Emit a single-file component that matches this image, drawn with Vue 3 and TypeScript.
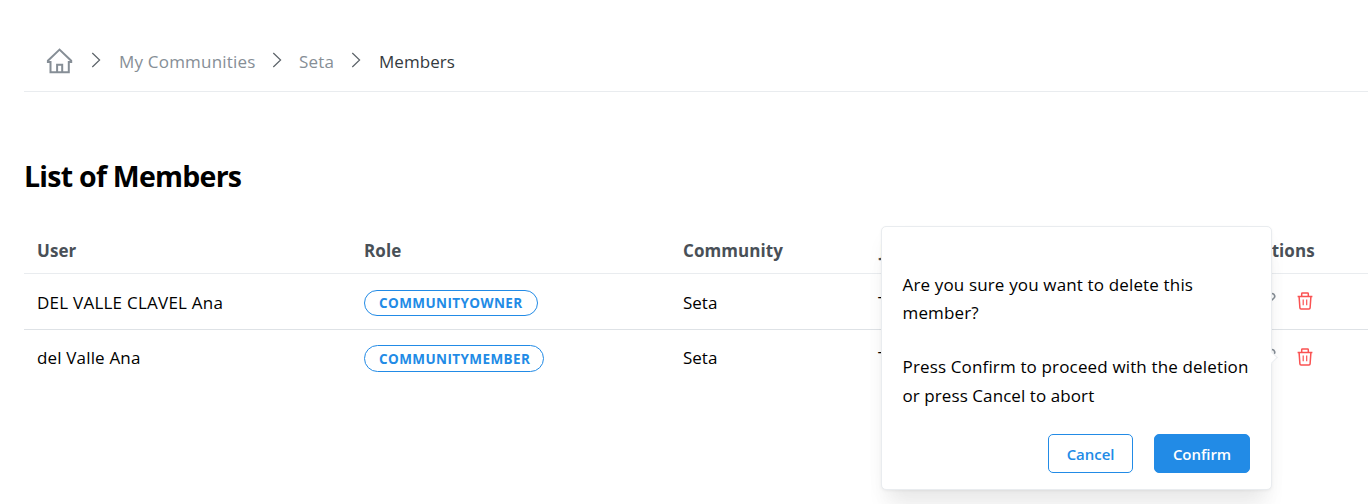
<script setup lang="ts">
interface Member {
  name: string
  role: string
  community: string
  joined: string
  kind: string
}

const members: Member[] = [
  { name: 'DEL VALLE CLAVEL Ana', role: 'COMMUNITYOWNER', community: 'Seta', joined: 'Tue', kind: 'owner' },
  { name: 'del Valle Ana', role: 'COMMUNITYMEMBER', community: 'Seta', joined: 'Tue', kind: 'member' },
]
</script>

<template>
  <div class="page">
    <nav class="crumbs">
      <svg class="home" width="28" height="28" viewBox="0 0 28 28">
        <path d="M13.5 2.6 1.9 13.7V15H4.5V25.3H22.8V15H25.2V13.7ZM11.1 25V17.7H16.2V25" />
      </svg>
      <svg class="sep" width="10" height="16" viewBox="0 0 10 16"><path d="M1.3 1 8.6 8 1.3 15" /></svg>
      <a class="c1">My Communities</a>
      <svg class="sep" width="10" height="16" viewBox="0 0 10 16"><path d="M1.3 1 8.6 8 1.3 15" /></svg>
      <a class="c2">Seta</a>
      <svg class="sep" width="10" height="16" viewBox="0 0 10 16"><path d="M1.3 1 8.6 8 1.3 15" /></svg>
      <span class="current">Members</span>
    </nav>

    <h1>List of Members</h1>

    <div class="table">
      <div class="row head">
        <span>User</span>
        <span>Role</span>
        <span>Community</span>
        <span class="joined">Join Date</span>
        <span class="act">Actions</span>
      </div>
      <div v-for="m in members" :key="m.kind" class="row" :class="m.kind">
        <span class="name">{{ m.name }}</span>
        <span class="role"><span class="badge">{{ m.role }}</span></span>
        <span>{{ m.community }}</span>
        <span>{{ m.joined }}</span>
        <span class="actions">
          <svg class="edit" width="18" height="18" viewBox="0 0 18 18">
            <path d="M2 16 3 11.5 12.3 2.2Q14 .8 16 2.4 17.6 4.4 16 6L6.5 15Z" />
          </svg>
          <svg class="trash" width="16" height="18" viewBox="0 0 16 18">
            <path d="M.6 4.5H15.4M4.7 4.3V1.8Q4.7 1.1 5.4 1.1H10.6Q11.3 1.1 11.3 1.8V4.3M2.1 4.6 2.9 15.9Q3 16.9 4 16.9H12Q13 16.9 13.1 15.9L13.9 4.6" />
            <path class="thin" d="M6.2 7.5V13.3M9.7 7.5V13.3" />
          </svg>
        </span>
      </div>
    </div>

    <div class="popover">
      <p>Are you sure you want to delete this<br />member?</p>
      <p>Press Confirm to proceed with the deletion<br /><span class="last">or press Cancel to abort</span></p>
      <div class="buttons">
        <button class="cancel">Cancel</button>
        <button class="confirm">Confirm</button>
      </div>
      <i class="arrow"></i>
    </div>
  </div>
</template>

<style>
body {
  margin: 0;
  overflow: hidden;
  background: #fff;
}
</style>

<style scoped>
.page {
  position: relative;
  box-sizing: border-box;
  width: 1368px;
  height: 504px;
  padding-left: 24px;
  overflow: hidden;
  font-family: "Open Sans", "Noto Sans", sans-serif;
  font-size: 17px;
  color: #000;
  white-space: nowrap;
}
.crumbs {
  display: flex;
  align-items: center;
  box-sizing: border-box;
  height: 92px;
  padding: 32px 0 0 22px;
  border-bottom: 1px solid #e9ecef;
  line-height: 24px;
  color: #868e96;
}
.crumbs svg {
  fill: none;
  flex: none;
}
.home {
  margin-top: -2px;
  stroke: #868e96;
  stroke-width: 2;
}
.sep {
  margin-top: -3px;
  stroke: #5c6369;
  stroke-width: 1.2;
}
.home + .sep { margin-left: 17px; margin-right: 18px; }
.c1 { width: 153px; letter-spacing: .2px; }
.c2 { width: 52px; margin-left: 17px; letter-spacing: .2px; }
.current { margin-left: 18px; color: #343a40; letter-spacing: .05px; }
h1 {
  margin: 63px 0 0;
  font-size: 28.5px;
  line-height: 42px;
  font-weight: 700;
  letter-spacing: -.75px;
}
.table { margin-top: 32px; }
.row {
  display: grid;
  grid-template-columns: 327px 319px 195px 372px 1fr;
  align-items: center;
  box-sizing: border-box;
  height: 56px;
  padding-left: 13px;
}
.head {
  height: 45px;
  padding-bottom: 2px;
  border-bottom: 1px solid #e9ecef;
  font-weight: 700;
  color: #495057;
  letter-spacing: .08px;
}
.joined { padding-left: 2px; }
.act { padding-left: 1px; }
.owner { padding-top: 2px; border-bottom: 1px solid #dee2e6; }
.member { padding-bottom: 2px; }
.owner .name { letter-spacing: .24px; }
.member .name { letter-spacing: .16px; }
.role { display: flex; }
.badge {
  display: flex;
  align-items: center;
  box-sizing: border-box;
  width: 174px;
  height: 26px;
  padding-left: 14px;
  border: 1px solid #228be6;
  border-radius: 13px;
  color: #228be6;
  font-size: 13.5px;
  font-weight: 700;
  letter-spacing: .4px;
}
.member .badge { width: 180px; height: 27px; margin-top: 3px; border-radius: 14px; }
.actions {
  display: flex;
  gap: 21px;
  padding-left: 8px;
}
.owner .actions { margin-top: -3px; }
.actions svg { fill: none; stroke: #868e96; stroke-width: 1.6; }
.actions .trash { stroke: #fa5252; stroke-width: 1.5; }
.actions .thin { stroke-width: 1.2; }
.popover {
  position: absolute;
  left: 881px;
  top: 226px;
  box-sizing: border-box;
  width: 391px;
  height: 264px;
  padding: 44px 20px 0 20.5px;
  border: 1px solid #e9ecef;
  border-radius: 5px;
  background: #fff;
  box-shadow: 0 1px 3px rgba(0, 0, 0, .05), 0 28px 23px -7px rgba(0, 0, 0, .05), 0 10px 20px -5px rgba(0, 0, 0, .06);
}
p {
  margin: 0 0 26px;
  line-height: 28px;
  letter-spacing: .15px;
}
.last { position: relative; top: 1px; letter-spacing: .08px; }
.buttons {
  display: flex;
  justify-content: flex-end;
  gap: 21px;
  margin: -1px 1px 0 0;
}
button {
  box-sizing: border-box;
  height: 39px;
  padding: 0;
  border: 1px solid #228be6;
  border-radius: 5px;
  font: 600 15px "Open Sans", sans-serif;
  letter-spacing: -.05px;
}
.cancel { width: 85px; color: #228be6; background: #fff; }
.confirm { width: 96px; color: #fff; background: #228be6; }
.arrow {
  position: absolute;
  right: -5px;
  top: 126px;
  width: 8px;
  height: 8px;
  border: solid #e9ecef;
  border-width: 1px 1px 0 0;
  background: #fff;
  transform: rotate(45deg);
}
</style>
